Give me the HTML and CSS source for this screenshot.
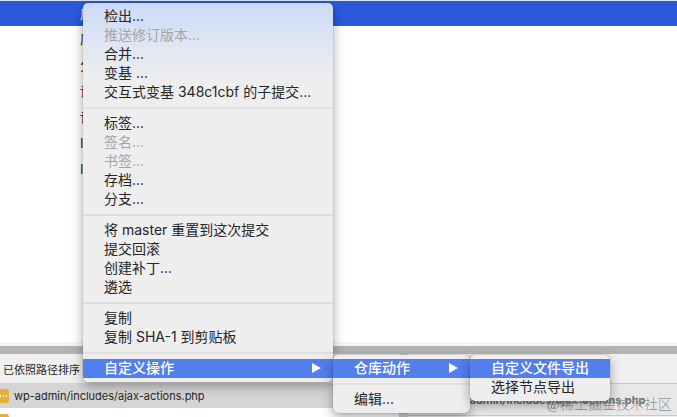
FILE: index.html
```
<!DOCTYPE html>
<html lang="zh-CN">
<head>
  <meta charset="UTF-8" />
  <title>提交历史</title>
  <link rel="stylesheet" href="styles.css">
</head>
<body>

  <main class="app">
    <ul class="commits">
      <li class="selected">原</li>
      <li>原</li>
      <li>分</li>
      <li>设</li>
      <li>设</li>
      <li>I</li>
      <li>I</li>
    </ul>

    <div class="splitter"></div>

    <div class="panes">
      <section class="files">
        <div class="pane-header">已依照路径排序</div>
        <div class="file selected">
          <svg class="status" viewBox="0 0 9 14"><path d="M0 0H6Q9 0 9 3V11Q9 14 6 14H0Z" /><path class="dots" d="M0 6h1v2H0zM3 6h1v2H3zM6 6h1v2H6z" /></svg>
          wp-admin/includes/ajax-actions.php
        </div>
        <div class="file">
          <svg class="status" viewBox="0 0 9 14"><path d="M0 0H6Q9 0 9 3V11Q9 14 6 14H0Z" /></svg>
        </div>
      </section>
      <div class="pane-divider"></div>
      <section class="diff">
        <div class="pane-header"></div>
        <div class="diff-title">wp-admin/includes/ajax-actions.php</div>
      </section>
    </div>
  </main>

  <div class="watermark">@稀土掘金技术社区</div>

  <ul class="menu context-menu">
    <li><button type="button">检出...</button></li>
    <li><button type="button" disabled>推送修订版本...</button></li>
    <li><button type="button">合并...</button></li>
    <li><button type="button">变基 ...</button></li>
    <li><button type="button">交互式变基 348c1cbf 的子提交...</button></li>
    <li class="separator"></li>
    <li><button type="button">标签...</button></li>
    <li><button type="button" disabled>签名...</button></li>
    <li><button type="button" disabled>书签...</button></li>
    <li><button type="button">存档...</button></li>
    <li><button type="button">分支...</button></li>
    <li class="separator"></li>
    <li><button type="button">将 master 重置到这次提交</button></li>
    <li><button type="button">提交回滚</button></li>
    <li><button type="button">创建补丁...</button></li>
    <li><button type="button">遴选</button></li>
    <li class="separator"></li>
    <li><button type="button">复制</button></li>
    <li><button type="button">复制 SHA-1 到剪贴板</button></li>
    <li class="separator"></li>
    <li class="parent">
      <button type="button" class="active">自定义操作
        <svg class="arrow" viewBox="0 0 9 10"><path d="M0 0L9 5L0 10Z" /></svg>
      </button>
      <ul class="menu submenu repo-menu">
        <li class="parent">
          <button type="button" class="active">仓库动作
            <svg class="arrow" viewBox="0 0 9 10"><path d="M0 0L9 5L0 10Z" /></svg>
          </button>
          <ul class="menu submenu export-menu">
            <li><button type="button" class="active">自定义文件导出</button></li>
            <li><button type="button">选择节点导出</button></li>
          </ul>
        </li>
        <li class="separator"></li>
        <li><button type="button">编辑...</button></li>
      </ul>
    </li>
  </ul>

</body>
</html>
```

FILE: styles.css
```
* {
  box-sizing: border-box;
}

body {
  margin: 0;
  overflow: hidden;
  font-family: Inter, "Noto Sans CJK SC", sans-serif;
  font-size: 14px;
  color: #262626;
  background: #fff;
}

ul {
  list-style: none;
  margin: 0;
  padding: 0;
}

.app {
  display: flex;
  flex-direction: column;
  height: 100vh;
  border-top: 1px solid #d9e6f4;
}

/* commit list */
.commits {
  flex: 1;
  min-height: 0;
  border-bottom: 4px solid #f6f6f6;
}

.commits li {
  height: 26px;
  padding-left: 80px;
  font-size: 13px;
  line-height: 26px;
}

.commits .selected {
  height: 25px;
  color: #fff;
  background: #2a59da;
}

.splitter {
  height: 8px;
  background: #b3b3b3;
}

/* bottom panes */
.panes {
  display: flex;
  height: 63px;
  overflow: hidden;
}

.files {
  flex: 0 0 59%;
}

.pane-header {
  height: 29px;
  padding-left: 3px;
  font-size: 11px;
  line-height: 32px;
  background: #f0f0f0;
}

.file {
  display: flex;
  align-items: center;
  gap: 5px;
  height: 25px;
  font-size: 11px;
}

.file.selected {
  background: #d5d5d5;
}

.status {
  width: 9px;
  height: 14px;
  fill: #e9ae35;
}

.status .dots {
  fill: #fff;
}

.pane-divider {
  width: 9px;
  background: #cfcfcf;
}

.diff {
  flex: 1;
  background: #f0f0f0;
}

.diff-title {
  height: 33px;
  padding-left: 40px;
  border-top: 1px solid #c8c8c8;
  border-bottom: 1px solid #c8c8c8;
  font-size: 11px;
  font-weight: 600;
  line-height: 33px;
  color: #666;
  background: #e8e8e8;
}

.watermark {
  position: absolute;
  right: 5px;
  bottom: 2px;
  font-family: "Liberation Serif", "Noto Sans CJK SC", serif;
  font-weight: 300;
  line-height: 20px;
  color: #929292;
}

/* menus */
.menu {
  position: absolute;
  padding: 4px 0;
  border-radius: 5px;
  background: #eee;
  box-shadow: 0 0 1px rgba(0, 0, 0, 0.5), 0 4px 12px rgba(0, 0, 0, 0.35);
}

.context-menu {
  top: 3px;
  left: 83px;
  width: 250px;
  background: linear-gradient(#cbdaf7, #dfe5f2 40px, #eee 80px);
}

.parent {
  position: relative;
}

.submenu {
  top: -4px;
  left: 100%;
}

.repo-menu {
  width: 137px;
}

.export-menu {
  width: 140px;
}

.menu button {
  display: flex;
  align-items: center;
  justify-content: space-between;
  width: 100%;
  height: 19px;
  padding: 0 12px 2px 21px;
  border: none;
  font: inherit;
  line-height: 17px;
  white-space: nowrap;
  color: #262626;
  background: none;
}

.menu button:disabled {
  color: #a4a5a8;
}

.menu .active {
  font-weight: 500;
  color: #fff;
  background: #537eee;
}

.separator {
  height: 12px;
  padding-top: 5px;
}

.separator::before {
  content: "";
  display: block;
  height: 2px;
  background: #dfdfdf;
}

.arrow {
  width: 9px;
  height: 10px;
  fill: #fff;
}
```
